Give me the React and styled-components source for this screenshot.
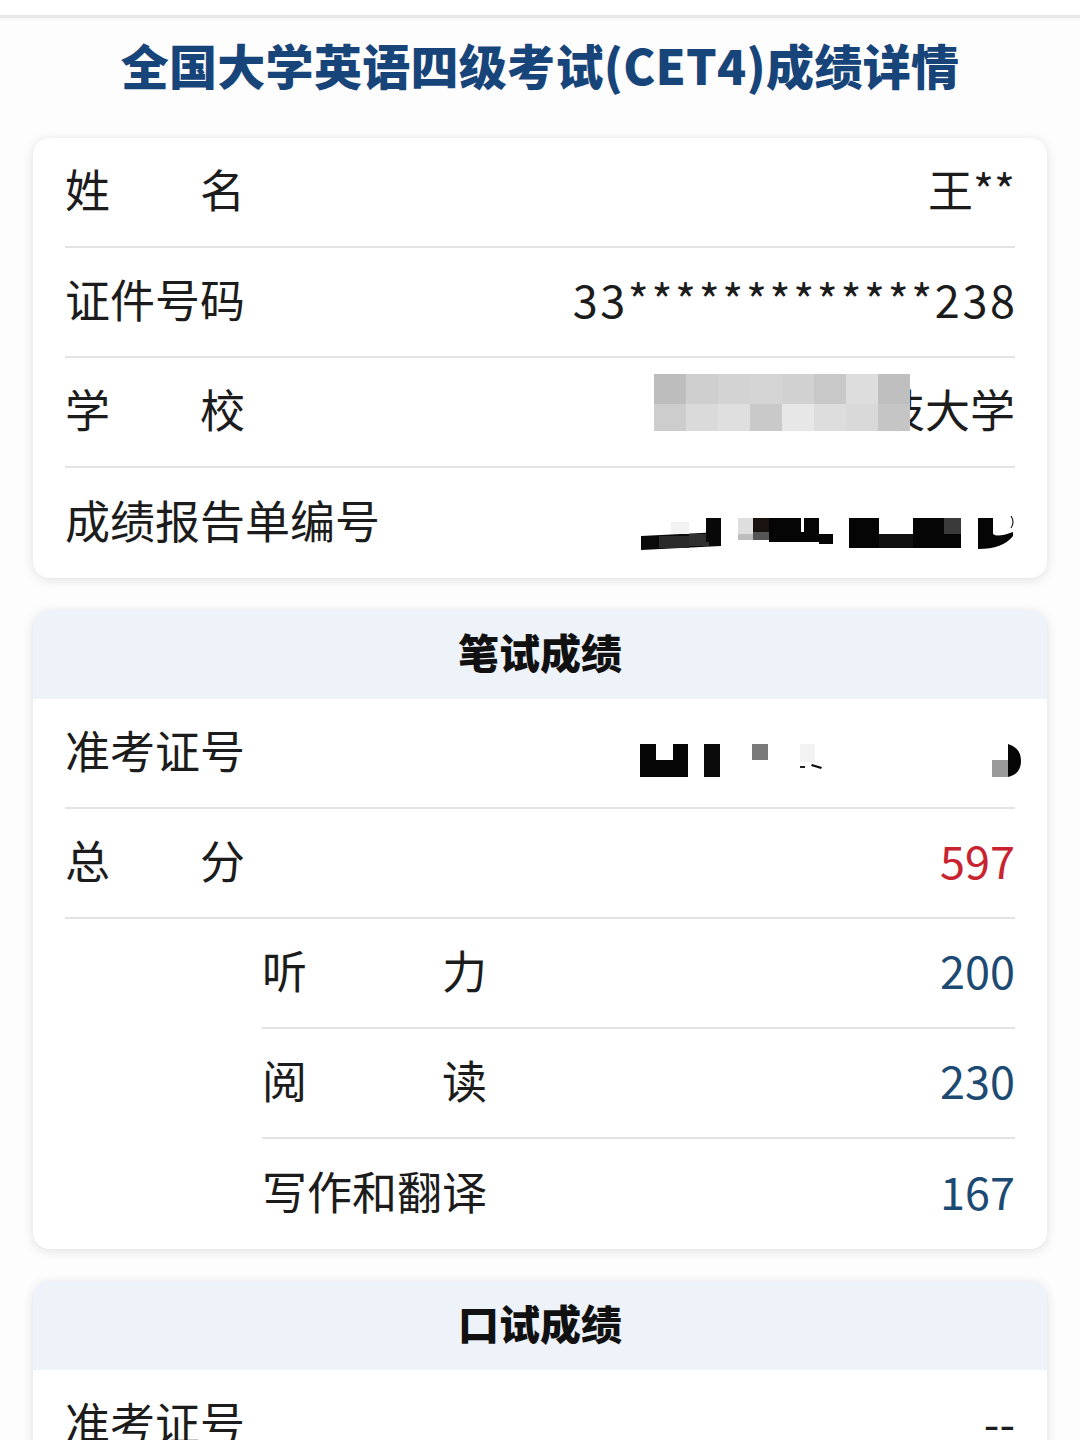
import React from "react";
import styled, { createGlobalStyle } from "styled-components";

const Global = createGlobalStyle`
  html, body { margin: 0; padding: 0; background: #fdfdfd; }
  body { font-family: "Noto Sans CJK SC", "Noto Sans", sans-serif; }
  * { box-sizing: border-box; }
`;

const Page = styled.div`
  width: 1080px;
  height: 1440px;
  overflow: hidden;
`;

const TopStrip = styled.div`
  height: 18px;
  border-bottom: 3px solid #e8e8e8;
  box-shadow: 0 1px 3px rgba(0, 0, 0, 0.05);
  background: #ffffff;
`;

const Title = styled.h1`
  margin: 0;
  padding: 14px 0 0;
  height: 120px;
  text-align: center;
  font-family: "Noto Sans CJK SC", sans-serif;
  font-weight: 900;
  font-size: 48px;
  line-height: 64px;
  color: #17457a;
  letter-spacing: 0.3px;
`;

const Stack = styled.div`
  display: flex;
  flex-direction: column;
  gap: 32px;
  padding: 0 33px;
`;

const Card = styled.section`
  background: #ffffff;
  border-radius: 16px;
  box-shadow: 0 2px 12px rgba(0, 0, 0, 0.11), 0 0 1px rgba(0, 0, 0, 0.08);
  overflow: hidden;
`;

const CardHeader = styled.div`
  height: 89px;
  padding-bottom: 8px;
  display: flex;
  align-items: center;
  justify-content: center;
  background: #eef3fa;
  font-weight: 900;
  font-size: 41px;
  color: #111111;
`;

const Row = styled.div`
  position: relative;
  height: 110px;
  padding-bottom: 8px;
  margin: 0 32px 0 ${(p) => p.$indent || 32}px;
  display: flex;
  align-items: center;
  justify-content: space-between;
  border-bottom: 2px solid #e3e3e3;
  &:last-child {
    border-bottom: none;
  }
`;

const Label = styled.span`
  display: inline-block;
  width: ${(p) => (p.$width ? `${p.$width}px` : "auto")};
  text-align: ${(p) => (p.$width ? "justify" : "left")};
  text-align-last: ${(p) => (p.$width ? "justify" : "auto")};
  font-size: 45px;
  line-height: 1;
  color: #1c1c1c;
  white-space: nowrap;
`;

const Value = styled.span`
  position: relative;
  font-size: 45px;
  line-height: 1;
  white-space: nowrap;
  color: ${(p) => p.$color || "#1c1c1c"};
  letter-spacing: ${(p) => p.$spacing || 0}px;
  margin-right: ${(p) => -(p.$spacing || 0)}px;
`;

const MosaicGrid = styled.div`
  position: absolute;
  right: 105px;
  top: -12px;
  width: 256px;
  height: 57px;
  display: grid;
  grid-template-columns: repeat(8, 1fr);
  grid-template-rows: 30px 27px;
`;

const Cell = styled.div`
  background: ${(p) => p.$c};
`;

const Redaction = styled.svg`
  display: block;
  margin-top: ${(p) => p.$shift || 0}px;
  margin-right: ${(p) => p.$pull || 0}px;
`;

const schoolCells = [
  "#bdbdbd", "#cfcfcf", "#d3d3d3", "#d5d5d5", "#d1d1d1", "#c8c8c8", "#dddddd", "#bfbfbf",
  "#cdcdcd", "#dadada", "#dfdfdf", "#c9c9c9", "#e7e7e7", "#dddddd", "#d9d9d9", "#c5c5c5",
];

function ReportRedaction() {
  return (
    <Redaction $shift={30} width="374" height="36" viewBox="0 0 374 36">
      <polygon points="0,20 80,16 80,30 0,34" fill="#0a0a0a" />
      <rect x="18" y="20" width="30" height="12" fill="#2a2a2a" />
      <rect x="48" y="18" width="20" height="12" fill="#303030" />
      <rect x="65" y="2" width="15" height="24" fill="#080808" />
      <rect x="30" y="6" width="18" height="12" fill="#f1f3f1" />
      <rect x="97" y="2" width="15" height="16" fill="#dedede" />
      <rect x="97" y="18" width="15" height="6" fill="#bdbdbd" />
      <rect x="112" y="2" width="16" height="14" fill="#1a1111" />
      <rect x="112" y="16" width="16" height="8" fill="#555" />
      <rect x="128" y="2" width="32" height="24" fill="#050505" />
      <rect x="160" y="16" width="18" height="10" fill="#050505" />
      <rect x="163" y="2" width="15" height="16" fill="#050505" />
      <rect x="178" y="18" width="14" height="10" fill="#050505" />
      <rect x="208" y="2" width="30" height="30" fill="#050505" />
      <rect x="238" y="18" width="34" height="14" fill="#111" />
      <rect x="272" y="2" width="48" height="30" fill="#050505" />
      <rect x="303" y="2" width="17" height="16" fill="#3a3a3a" />
      <path d="M337 2 H352 V18 Q356 22 372 16 L372 20 Q362 33 337 33 Z" fill="#050505" />
      <path d="M370 0 Q374 6 370 12" stroke="#222" strokeWidth="1.2" fill="none" />
    </Redaction>
  );
}

function AdmissionRedaction() {
  return (
    <Redaction $shift={24} $pull={-6} width="381" height="34" viewBox="0 0 381 34">
      <path d="M0 0 H16 V16 H33 V0 H48 V33 H0 Z" fill="#050505" />
      <rect x="16" y="0" width="17" height="16" fill="#ffffff" />
      <rect x="64" y="0" width="16" height="33" fill="#0a0a0a" />
      <rect x="112" y="0" width="16" height="16" fill="#7a7a7a" />
      <rect x="160" y="0" width="15" height="18" fill="#f3f3f3" />
      <rect x="160" y="22" width="5" height="2" fill="#222" />
      <path d="M172 20 L182 23 L181 25 L171 22 Z" fill="#111" />
      <rect x="352" y="16" width="16" height="17" fill="#9a9a9a" />
      <path d="M368 0 Q381 4 381 17 Q381 30 368 33 Z" fill="#050505" />
    </Redaction>
  );
}

const NAVY = "#1d4a72";

export default function App() {
  return (
    <Page>
      <Global />
      <TopStrip />
      <Title>全国大学英语四级考试(CET4)成绩详情</Title>
      <Stack>
        <Card>
          <Row>
            <Label $width={180}>姓名</Label>
            <Value>王**</Value>
          </Row>
          <Row>
            <Label $width={180}>证件号码</Label>
            <Value $spacing={2.6}>33*************238</Value>
          </Row>
          <Row>
            <Label $width={180}>学校</Label>
            <Value>
              <MosaicGrid>
                {schoolCells.map((c, i) => (
                  <Cell key={i} $c={c} />
                ))}
              </MosaicGrid>
              技大学
            </Value>
          </Row>
          <Row>
            <Label>成绩报告单编号</Label>
            <ReportRedaction />
          </Row>
        </Card>

        <Card>
          <CardHeader>笔试成绩</CardHeader>
          <Row>
            <Label $width={180}>准考证号</Label>
            <AdmissionRedaction />
          </Row>
          <Row>
            <Label $width={180}>总分</Label>
            <Value $color="#c8232e">597</Value>
          </Row>
          <Row $indent={229}>
            <Label $width={225}>听力</Label>
            <Value $color={NAVY}>200</Value>
          </Row>
          <Row $indent={229}>
            <Label $width={225}>阅读</Label>
            <Value $color={NAVY}>230</Value>
          </Row>
          <Row $indent={229}>
            <Label $width={225}>写作和翻译</Label>
            <Value $color={NAVY}>167</Value>
          </Row>
        </Card>

        <Card>
          <CardHeader>口试成绩</CardHeader>
          <Row>
            <Label $width={180}>准考证号</Label>
            <Value>--</Value>
          </Row>
        </Card>
      </Stack>
    </Page>
  );
}
